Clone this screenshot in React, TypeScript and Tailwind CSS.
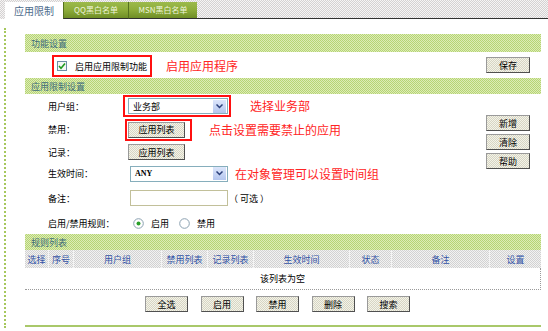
import React from "react";

const cn = "font-['Noto_Sans_CJK_SC','Noto_Sans',sans-serif]";

const Btn: React.FC<{ label: string; w?: string }> = ({ label, w = "w-[44px]" }) => (
  <div
    className={`${w} h-[16px] shrink-0 flex items-center justify-center border border-[#9a9a9a] border-r-[#505050] border-b-[#505050] bg-[repeating-conic-gradient(#f4f3e8_0%_25%,#d6d5c4_0%_50%)] bg-[length:2px_2px] text-[9px] text-black`}
  >
    {label}
  </div>
);

const GreenBar: React.FC<{ title: string; h: string }> = ({ title, h }) => (
  <div
    className={`${h} flex items-center pl-[6px] bg-[repeating-conic-gradient(#b6d474_0%_25%,#dcecb6_0%_50%)] bg-[length:2px_2px] text-[9px] text-[#3f6c7c]`}
  >
    {title}
  </div>
);

const FakeSelect: React.FC<{ value: string; w: string; latin?: boolean }> = ({ value, w, latin }) => (
  <div className={`${w} h-[16px] flex items-center border border-[#86aebc] bg-white`}>
    <span
      className={
        latin
          ? "flex-1 pl-[4px] text-[8px] font-bold font-['Liberation_Serif',serif]"
          : "flex-1 pl-[4px] text-[9px]"
      }
    >
      {value}
    </span>
    <span className="w-[13px] h-[13px] mr-[1px] flex items-center justify-center bg-gradient-to-b from-[#dde6fb] to-[#b4c6ee]">
      <svg width="7" height="5" viewBox="0 0 7 5">
        <path d="M0.5 0.5 L3.5 3.5 L6.5 0.5" fill="none" stroke="#2b3f7a" strokeWidth="1.5" />
      </svg>
    </span>
  </div>
);

const Note: React.FC<{ text: string; ml: string }> = ({ text, ml }) => (
  <span className={`${ml} text-[12px] leading-none text-[#ff2424]`}>{text}</span>
);

const Radio: React.FC<{ on?: boolean }> = ({ on }) => (
  <svg width="11" height="11" viewBox="0 0 11 11">
    <circle cx="5.5" cy="5.5" r="4.8" fill="#fff" stroke="#8aa0b0" strokeWidth="1" />
    {on && <circle cx="5.5" cy="5.5" r="2" fill="#2aa02a" />}
  </svg>
);

const cols = [
  { t: "选择", w: "w-[24px]" },
  { t: "序号", w: "w-[25px]" },
  { t: "用户组", w: "w-[88px]" },
  { t: "禁用列表", w: "w-[46px]" },
  { t: "记录列表", w: "w-[46px]" },
  { t: "生效时间", w: "w-[96px]" },
  { t: "状态", w: "w-[42px]" },
  { t: "备注", w: "w-[98px]" },
  { t: "设置", w: "w-[51px]" },
];

export default function App() {
  return (
    <div className={`w-[548px] h-[331px] bg-white overflow-hidden leading-none text-black ${cn}`}>
      {/* tab strip */}
      <div className="h-[19px] flex bg-[repeating-conic-gradient(#d4d2d2_0%_25%,#f6f4f4_0%_50%)] bg-[length:2px_2px]">
        <div className="w-[5px]" />
        <div className="w-[58px] mt-[2px] bg-white flex items-center justify-center text-[10px] text-[#4d6b8c]">
          应用限制
        </div>
        <div className="w-[65px] mt-[2px] border-b border-[#303030] border-l border-l-[#55701e] bg-gradient-to-b from-[#9cba4c] via-[#8dac3a] to-[#6f8e26] flex items-center justify-center text-[8px] text-[#eef4dc]">
          QQ黑白名单
        </div>
        <div className="w-[69px] mt-[2px] border-b border-[#303030] border-l border-l-[#55701e] bg-gradient-to-b from-[#9cba4c] via-[#8dac3a] to-[#6f8e26] flex items-center justify-center text-[8px] text-[#eef4dc]">
          MSN黑白名单
        </div>
        <div className="flex-1 border-b border-[#303030]" />
      </div>

      <div className="flex">
        <div className="w-[25px] flex">
          <div className="ml-[4px] mt-[9px] h-[300px] border-l-2 border-dotted border-[#a6c75c]" />
        </div>

        <div className="w-[516px] pt-[15px]">
          <GreenBar title="功能设置" h="h-[18px]" />

          <div className="h-[26px] flex items-start">
            <div className="ml-[27px] mt-[3px] w-[100px] h-[22px] border-2 border-[#ff1010] flex items-center pl-[3px]">
              <svg width="10" height="10" viewBox="0 0 10 10">
                <rect x="0.5" y="0.5" width="9" height="9" fill="#f4f8f4" stroke="#6e8ea6" />
                <path d="M2 5 L4 7.2 L8 2.6" fill="none" stroke="#1e9a1e" strokeWidth="1.6" />
              </svg>
              <span className="ml-[8px] text-[9px]">启用应用限制功能</span>
            </div>
            <Note text="启用应用程序" ml="ml-[14px] mt-[8px]" />
            <div className="ml-auto mr-[11px] mt-[5px]">
              <Btn label="保存" />
            </div>
          </div>

          <GreenBar title="应用限制设置" h="h-[16px]" />

          <div className="flex">
            <div className="flex-1 text-[9px]">
              <div className="h-[24px] flex items-center">
                <div className="w-[98px] pl-[23px]">用户组：</div>
                <div className="w-[108px] h-[22px] border-2 border-[#ff1010] flex items-center pl-[3px]">
                  <FakeSelect value="业务部" w="w-[100px]" />
                </div>
                <Note text="选择业务部" ml="ml-[19px]" />
              </div>

              <div className="h-[23px] flex items-center">
                <div className="w-[98px] pl-[23px]">禁用：</div>
                <div className="ml-[2px] w-[67px] h-[22px] border-2 border-[#ff1010] flex items-center pl-[1px]">
                  <Btn label="应用列表" w="w-[57px]" />
                </div>
                <Note text="点击设置需要禁止的应用" ml="ml-[17px]" />
              </div>

              <div className="h-[22px] flex items-center">
                <div className="w-[98px] pl-[23px]">记录：</div>
                <div className="ml-[5px]">
                  <Btn label="应用列表" w="w-[57px]" />
                </div>
              </div>

              <div className="h-[21px] flex items-center">
                <div className="w-[98px] pl-[23px]">生效时间：</div>
                <div className="ml-[7px]">
                  <FakeSelect value="ANY" w="w-[98px]" latin />
                </div>
                <Note text="在对象管理可以设置时间组" ml="ml-[7px]" />
              </div>

              <div className="h-[28px] flex items-center">
                <div className="w-[98px] pl-[23px]">备注：</div>
                <div className="ml-[7px] w-[98px] h-[16px] border border-[#c2c09a] bg-white" />
                <span className="ml-[1px] whitespace-pre">（ 可选 ）</span>
              </div>

              <div className="h-[22px] flex items-center">
                <div className="w-[98px] pl-[23px]">启用/禁用规则：</div>
                <div className="ml-[10px] flex items-center">
                  <Radio on />
                  <span className="ml-[7px]">启用</span>
                  <span className="ml-[10px] flex items-center">
                    <Radio />
                  </span>
                  <span className="ml-[7px]">禁用</span>
                </div>
              </div>
            </div>

            <div className="mr-[11px] pt-[21px] flex flex-col gap-[3px]">
              <Btn label="新增" />
              <Btn label="清除" />
              <Btn label="帮助" />
            </div>
          </div>

          <GreenBar title="规则列表" h="h-[16px]" />

          <div className="h-[18px] flex bg-[repeating-conic-gradient(#d2d2d2_0%_25%,#f2f2f2_0%_50%)] bg-[length:2px_2px]">
            {cols.map((c, i) => (
              <div
                key={c.t}
                className={`${c.w} flex items-center justify-center text-[9px] text-[#3252a6] ${
                  i < cols.length - 1 ? "border-r border-[#f4f4f4]" : ""
                }`}
              >
                {c.t}
              </div>
            ))}
          </div>

          <div className="h-[22px] flex items-center justify-center border-b border-r border-dotted border-[#9a9a9a] text-[9px]">
            该列表为空
          </div>

          <div className="h-[21px] pt-[6px] pl-[120px] flex gap-[12.5px]">
            <Btn label="全选" w="w-[43px]" />
            <Btn label="启用" w="w-[43px]" />
            <Btn label="禁用" w="w-[43px]" />
            <Btn label="删除" w="w-[43px]" />
            <Btn label="搜索" w="w-[43px]" />
          </div>

          <div className="mt-[14px] h-[2px] bg-[#a9c86a]" />
        </div>
      </div>
    </div>
  );
}
